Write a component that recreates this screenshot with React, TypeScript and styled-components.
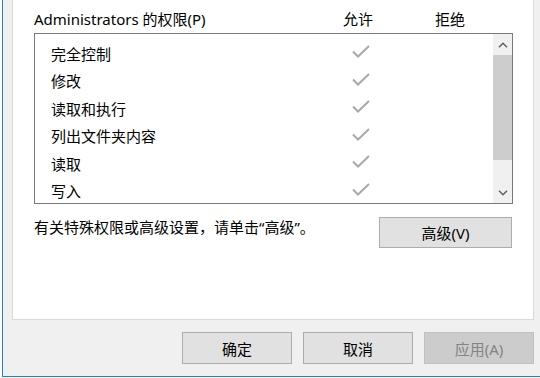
import React from "react";
import styled, { createGlobalStyle } from "styled-components";

const GlobalStyle = createGlobalStyle`
  html, body {
    margin: 0;
    padding: 0;
    background: #ffffff;
    overflow: hidden;
  }
  body {
    font-family: "Noto Sans", "Noto Sans CJK SC", sans-serif;
    font-size: 15px;
    color: #000000;
  }
  * {
    box-sizing: border-box;
  }
`;

type Permission = {
  name: string;
  allow: boolean;
  deny: boolean;
};

const permissions: Permission[] = [
  { name: "完全控制", allow: true, deny: false },
  { name: "修改", allow: true, deny: false },
  { name: "读取和执行", allow: true, deny: false },
  { name: "列出文件夹内容", allow: true, deny: false },
  { name: "读取", allow: true, deny: false },
  { name: "写入", allow: true, deny: false },
];

const CheckMark = () => (
  <CheckSvg width="18" height="14" viewBox="0 0 18 14">
    <path d="M1 6.5 L6 11.5 L17 1" fill="none" stroke="#a9a9a9" strokeWidth="2" />
  </CheckSvg>
);

const Chevron = ({ up }: { up?: boolean }) => (
  <svg width="10" height="6" viewBox="0 0 10 6">
    <path
      d={up ? "M1 5.2 L5 1.2 L9 5.2" : "M1 0.8 L5 4.8 L9 0.8"}
      fill="none"
      stroke="#606060"
      strokeWidth="1.5"
    />
  </svg>
);

const App: React.FC = () => {
  return (
    <>
      <GlobalStyle />
      <Screen>
        <Window>
          <Panel>
            <Header>
              <span>Administrators 的权限(P)</span>
              <HeaderCol>允许</HeaderCol>
              <HeaderCol>拒绝</HeaderCol>
            </Header>
            <ListBox>
              <Rows>
                {permissions.map((p) => (
                  <Row key={p.name}>
                    <span>{p.name}</span>
                    <Cell>{p.allow && <CheckMark />}</Cell>
                    <Cell>{p.deny && <CheckMark />}</Cell>
                  </Row>
                ))}
              </Rows>
              <ScrollBar>
                <ArrowButton>
                  <Chevron up />
                </ArrowButton>
                <Thumb />
                <Track />
                <ArrowButton>
                  <Chevron />
                </ArrowButton>
              </ScrollBar>
            </ListBox>
            <Footer>
              <Hint>有关特殊权限或高级设置，请单击“高级”。</Hint>
              <AdvancedButton>高级(V)</AdvancedButton>
            </Footer>
          </Panel>
          <ButtonBar>
            <DialogButton>确定</DialogButton>
            <DialogButton>取消</DialogButton>
            <DialogButton disabled>应用(A)</DialogButton>
          </ButtonBar>
        </Window>
      </Screen>
    </>
  );
};

export default App;

const Screen = styled.div`
  width: 540px;
  height: 378px;
  padding-left: 2px;
  display: flex;
  align-items: flex-start;
`;

const Window = styled.div`
  width: 538px;
  height: 377px;
  background: #f0f0f0;
  border-left: 1px solid #1883d7;
  border-bottom: 1px solid #1883d7;
  display: flex;
  flex-direction: column;
`;

const Panel = styled.div`
  margin: 0 6px 0 9px;
  height: 320px;
  background: #ffffff;
  border: 1px solid #d9d9d9;
  border-top: none;
  padding: 9px 20px 0 21px;
  display: flex;
  flex-direction: column;
`;

const Header = styled.div`
  display: grid;
  grid-template-columns: 1fr 60px 60px;
  column-gap: 32px;
  padding-right: 33px;
  height: 24px;
  line-height: 20px;
  white-space: nowrap;
`;

const HeaderCol = styled.span`
  text-align: center;
`;

const ListBox = styled.div`
  height: 171px;
  border: 1px solid #7a7a7a;
  display: flex;
  background: #ffffff;
`;

const Rows = styled.div`
  flex: 1;
  overflow: hidden;
  padding-top: 6px;
`;

const Row = styled.div`
  height: 27.5px;
  display: grid;
  grid-template-columns: 1fr 60px 60px;
  column-gap: 32px;
  padding: 0 12px 0 16px;
  align-items: center;
  line-height: 20px;
`;

const Cell = styled.div`
  display: flex;
  justify-content: center;
  align-items: center;
`;

const CheckSvg = styled.svg`
  margin-left: 4px;
  margin-top: -3px;
`;

const ScrollBar = styled.div`
  width: 19px;
  background: #f0f0f0;
  display: flex;
  flex-direction: column;
`;

const ArrowButton = styled.div`
  height: 21px;
  display: flex;
  align-items: center;
  justify-content: center;
`;

const Thumb = styled.div`
  height: 105px;
  background: #cdcdcd;
`;

const Track = styled.div`
  flex: 1;
`;

const Footer = styled.div`
  margin-top: 13px;
  display: flex;
  justify-content: space-between;
  align-items: flex-start;
  padding-right: 1px;
`;

const Hint = styled.span`
  line-height: 20px;
  margin-top: 0;
  white-space: nowrap;
`;

const ButtonBase = styled.button`
  font-family: "Noto Sans", "Noto Sans CJK SC", sans-serif;
  font-size: 15px;
  color: #000000;
  background: #e1e1e1;
  border: 1px solid #adadad;
  border-radius: 0;
  padding: 0;
  display: flex;
  align-items: center;
  justify-content: center;

  &:disabled {
    background: #cccccc;
    border-color: #bfbfbf;
    color: #838383;
  }
`;

const AdvancedButton = styled(ButtonBase)`
  width: 133px;
  height: 31px;
`;

const ButtonBar = styled.div`
  margin-top: 12px;
  display: flex;
  justify-content: flex-end;
  gap: 11px;
  padding-right: 6px;
`;

const DialogButton = styled(ButtonBase)`
  width: 110px;
  height: 32px;
`;
